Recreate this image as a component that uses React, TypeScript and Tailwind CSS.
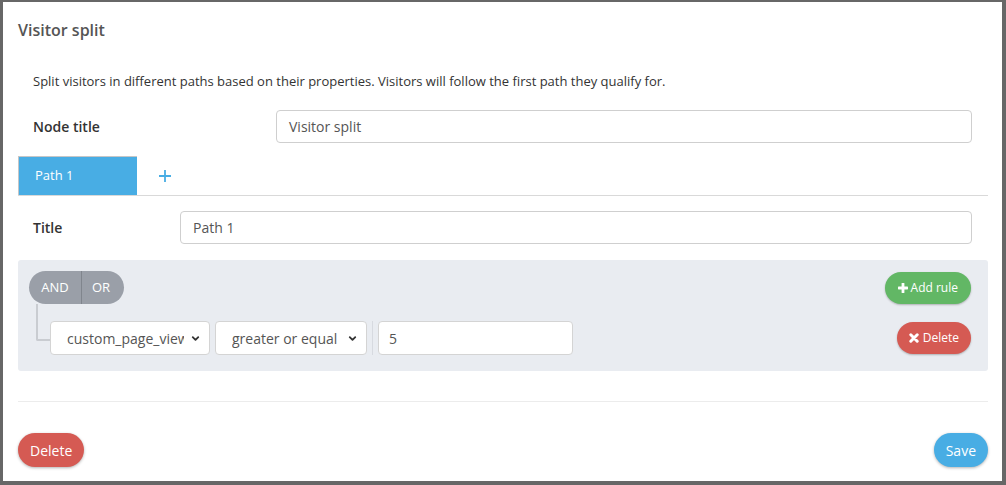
import { ChevronDown } from "lucide-react";

const font = { fontFamily: '"Open Sans", "Noto Sans", Arial, sans-serif' };

function TextInput({ value, className }: { value: string; className?: string }) {
  return (
    <div
      className={
        "h-[33px] flex items-center rounded-[4px] border border-[#cfcfcf] bg-white text-[14px] text-[#555] " +
        (className ?? "")
      }
    >
      {value}
    </div>
  );
}

function FakeSelect({ value, className }: { value: string; className: string }) {
  return (
    <div
      className={
        "h-[34px] flex items-center rounded-[4px] border border-[#d4d4d4] bg-white text-[14px] text-[#555] relative overflow-hidden " +
        className
      }
    >
      <span className="whitespace-nowrap overflow-hidden text-clip flex-1">{value}</span>
      <ChevronDown className="w-[11px] h-[11px] text-[#333] shrink-0 ml-[6px] mr-[8px]" strokeWidth={4} />
    </div>
  );
}

function PlusIcon() {
  return (
    <svg viewBox="0 0 10 10" className="w-[10px] h-[10px]" fill="currentColor">
      <rect x="3.6" y="0" width="2.8" height="10" rx="0.6" />
      <rect x="0" y="3.6" width="10" height="2.8" rx="0.6" />
    </svg>
  );
}

function TimesIcon() {
  return (
    <svg viewBox="0 0 10 10" className="w-[10px] h-[10px]" stroke="currentColor" strokeWidth="3" strokeLinecap="round">
      <path d="M1.8 1.8 L8.2 8.2 M8.2 1.8 L1.8 8.2" />
    </svg>
  );
}

export default function App() {
  return (
    <div
      className="w-[1006px] h-[485px] bg-[#676767] pt-[2px] pl-[3px] pr-[4px] pb-[4px] overflow-hidden"
      style={font}
    >
      <div className="w-full h-full bg-white pl-[15px] pr-[14px] flex flex-col">
        <h2 className="mt-[17px] text-[16px] leading-[22px] font-semibold text-[#555]">Visitor split</h2>

        <p className="mt-[31px] px-[15px] text-[13px] leading-[18px] text-[#333]">
          Split visitors in different paths based on their properties. Visitors will follow the first path they
          qualify for.
        </p>

        <div className="mt-[20px] flex items-center pl-[15px] pr-[16px]">
          <label className="w-[243px] text-[14px] font-semibold text-[#333]">Node title</label>
          <TextInput value="Visitor split" className="flex-1 pl-[12px]" />
        </div>

        <div className="mt-[13px] flex items-stretch border-b border-[#d9d9d9] h-[40px]">
          <div className="w-[119px] bg-[#48ade4] border-t border-l border-[#c6c6c6] text-white text-[13px] flex items-center pl-[16px]">
            Path 1
          </div>
          <div className="w-[56px] flex items-center justify-center text-[#48ade4]">
            <svg viewBox="0 0 12 12" className="w-[12px] h-[12px]" stroke="currentColor" strokeWidth="1.8">
              <path d="M6 0 V12 M0 6 H12" />
            </svg>
          </div>
        </div>

        <div className="mt-[15px] flex items-center pl-[15px] pr-[16px]">
          <label className="w-[147px] text-[14px] font-semibold text-[#333]">Title</label>
          <TextInput value="Path 1" className="flex-1 pl-[12px]" />
        </div>

        <div className="mt-[16px] h-[111px] bg-[#e9ecf1] rounded-[3px] pl-[11px] pr-[17px] pt-[11px]">
          <div className="flex items-center justify-between">
            <div className="flex h-[33px] rounded-full bg-[#9a9fa8] text-white text-[13px] overflow-hidden">
              <span className="w-[53px] flex items-center justify-center border-r border-[#80858d]">AND</span>
              <span className="w-[42px] flex items-center justify-center pr-[4px]">OR</span>
            </div>
            <button className="h-[32px] px-[13px] rounded-full bg-[#62b765] text-white text-[12px] flex items-center gap-[3px] shadow-[0_1px_2px_rgba(0,0,0,0.25)]">
              <PlusIcon />
              Add rule
            </button>
          </div>

          <div className="flex items-start">
            <div className="ml-[7px] w-[14px] h-[37px] border-l-2 border-b-2 border-[#c9ccd1] rounded-bl-[2px] shrink-0" />
            <div className="mt-[17px] flex items-center flex-1">
              <FakeSelect value="custom_page_views" className="w-[160px] pl-[16px]" />
              <FakeSelect value="greater or equal" className="w-[152px] ml-[5px] pl-[16px]" />
              <div className="w-px h-[34px] bg-[#d7dae0] ml-[5px]" />
              <div className="ml-[5px] w-[195px] h-[34px] flex items-center rounded-[4px] border border-[#d4d4d4] bg-white text-[14px] text-[#555] pl-[10px]">
                5
              </div>
              <div className="flex-1" />
              <button className="h-[32px] px-[12px] rounded-full bg-[#d55a53] text-white text-[12px] flex items-center gap-[4px] shadow-[0_1px_2px_rgba(0,0,0,0.25)]">
                <TimesIcon />
                Delete
              </button>
            </div>
          </div>
        </div>

        <div className="mt-[30px] h-px bg-[#ececec]" />

        <div className="mt-[31px] flex items-center justify-between">
          <button className="h-[34px] px-[12px] rounded-full bg-[#d55a53] text-white text-[14px] shadow-[0_1px_3px_rgba(0,0,0,0.3)]">
            Delete
          </button>
          <button className="h-[34px] px-[12px] rounded-full bg-[#48ade4] text-white text-[14px] shadow-[0_1px_3px_rgba(0,0,0,0.3)]">
            Save
          </button>
        </div>
      </div>
    </div>
  );
}
